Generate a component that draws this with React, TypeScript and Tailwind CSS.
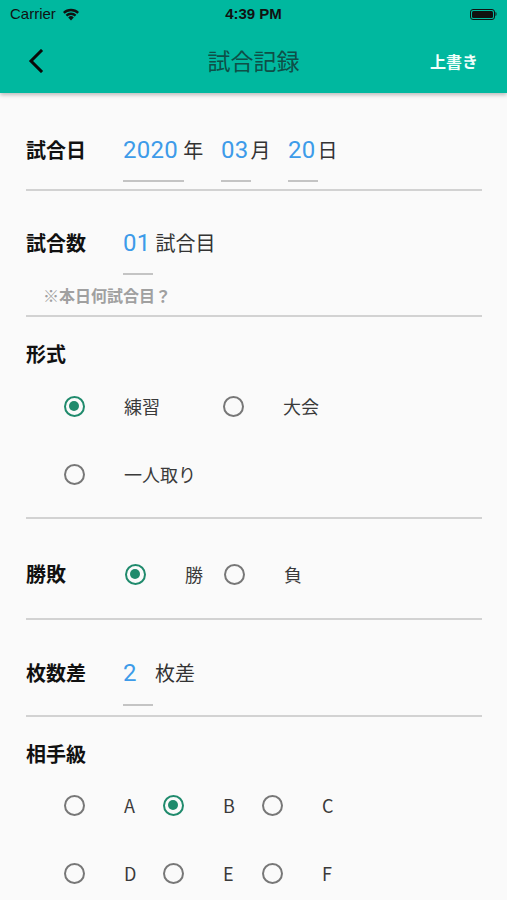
import React from "react";

const JP = { fontFamily: '"Noto Sans CJK JP", "Noto Sans", sans-serif' };
const NUM = { fontFamily: 'Roboto, "Noto Sans CJK JP", sans-serif' };

function Radio({ checked }: { checked?: boolean }) {
  return checked ? (
    <div className="w-[21px] h-[21px] rounded-full border-[2.5px] border-[#1f8a6c] flex items-center justify-center">
      <div className="w-[10px] h-[10px] rounded-full bg-[#1f8a6c]" />
    </div>
  ) : (
    <div className="w-[21px] h-[21px] rounded-full border-[2.5px] border-[#777777]" />
  );
}

function Divider() {
  return <div className="h-[2px] bg-[#d2d2d2]" />;
}

function Field({ value, unit, w, boxW, gap }: { value: string; unit: string; w: number; boxW: number; gap?: boolean }) {
  return (
    <div className="flex flex-col" style={{ width: boxW }}>
      <div className="flex items-center h-[28px]">
        <span className="text-[24px] text-[#3d9be9] leading-[28px] tracking-[0.3px]" style={NUM}>{value}</span>
        <span className={`text-[20px] text-[#333333] leading-[28px] ${gap ? "ml-[5px]" : "ml-[2px]"}`} style={JP}>{unit}</span>
      </div>
      <div className="h-[2px] bg-[#c4c4c4] mt-[16px]" style={{ width: w }} />
    </div>
  );
}

function RadioItem({ checked, label, width }: { checked?: boolean; label: string; width: number }) {
  return (
    <div className="flex items-center" style={{ width }}>
      <div className="w-[48px] flex justify-center">
        <Radio checked={checked} />
      </div>
      <span className="ml-[26px] text-[18px] text-[#3a3a3a]" style={JP}>{label}</span>
    </div>
  );
}

export default function App() {
  return (
    <div className="w-[507px] h-[900px] bg-[#fafafa] overflow-hidden relative" style={JP}>
      {/* Header */}
      <div className="bg-[#00b89f] h-[93px] relative z-10 shadow-[0_2px_4px_rgba(0,0,0,0.25)]">
        <div className="h-[28px] flex items-center justify-between px-[10px] relative">
          <div className="flex items-center gap-[6px]">
            <span className="text-[15px] text-[#111]" style={{ fontFamily: '"Liberation Sans", Arial, sans-serif' }}>Carrier</span>
            <svg width="18" height="13" viewBox="0 0 18 13">
              <path d="M9 12.5 L6.2 9.4 A4 4 0 0 1 11.8 9.4 Z" fill="#111" />
              <path d="M3.6 6.8 A7.6 7.6 0 0 1 14.4 6.8 L12.8 8.5 A5.3 5.3 0 0 0 5.2 8.5 Z" fill="#111" />
              <path d="M1 4.1 A11.3 11.3 0 0 1 17 4.1 L15.4 5.8 A9 9 0 0 0 2.6 5.8 Z" fill="#111" />
            </svg>
          </div>
          <span className="absolute left-1/2 -translate-x-1/2 text-[15px] font-bold text-[#111]" style={{ fontFamily: '"Liberation Sans", Arial, sans-serif' }}>4:39 PM</span>
          <div className="flex items-center">
            <div className="w-[25px] h-[11px] rounded-[3px] border border-[#111] p-[1px]">
              <div className="w-full h-full bg-[#111] rounded-[1.5px]" />
            </div>
            <div className="w-[2px] h-[4px] bg-[#111] opacity-50 rounded-r-sm" />
          </div>
        </div>
        <div className="h-[65px] flex items-center relative">
          <svg className="ml-[27px]" width="18" height="24" viewBox="0 0 18 24">
            <path d="M14 2 L4 12 L14 22" stroke="#0a0a0a" strokeWidth="3" fill="none" strokeLinecap="square" />
          </svg>
          <span className="absolute left-1/2 -translate-x-1/2 text-[23px] text-[#0e4f47]" style={JP}>試合記録</span>
          <span className="absolute right-[29px] text-[16px] font-bold text-[#f2fffb]" style={JP}>上書き</span>
        </div>
      </div>

      <div className="px-[26px] pr-[25px]">
        {/* 試合日 */}
        <div className="pt-[43px] flex items-start">
          <span className="w-[97px] text-[20px] font-bold text-[#111] leading-[28px]">試合日</span>
          <div className="flex">
            <Field value="2020" unit="年" w={61} boxW={98} gap />
            <Field value="03" unit="月" w={30} boxW={67} />
            <Field value="20" unit="日" w={30} boxW={60} />
          </div>
        </div>
        <div className="mt-[7px]"><Divider /></div>

        {/* 試合数 */}
        <div className="pt-[38px] flex items-start">
          <span className="w-[97px] text-[20px] font-bold text-[#111] leading-[28px]">試合数</span>
          <Field value="01" unit="試合目" w={30} boxW={120} gap />
        </div>
        <div className="mt-[10px] ml-[17px] h-[20px] flex items-center text-[16px] font-bold text-[#a0a0a0]">※本日何試合目？</div>
        <div className="mt-[10px]"><Divider /></div>

        {/* 形式 */}
        <div className="pt-[23px] h-[55px]">
          <span className="text-[20px] font-bold text-[#111] leading-[28px] block">形式</span>
        </div>
        <div className="ml-[24px]">
          <div className="h-[68px] flex items-center">
            <RadioItem checked label="練習" width={159} />
            <RadioItem label="大会" width={159} />
          </div>
          <div className="h-[68px] flex items-center">
            <RadioItem label="一人取り" width={159} />
          </div>
        </div>
        <div className="mt-[9px]"><Divider /></div>

        {/* 勝敗 */}
        <div className="pt-[41px] flex items-center h-[69px]">
          <span className="w-[85px] text-[20px] font-bold text-[#111] leading-[28px]">勝敗</span>
          <RadioItem checked label="勝" width={99} />
          <RadioItem label="負" width={99} />
        </div>
        <div className="mt-[30px]"><Divider /></div>

        {/* 枚数差 */}
        <div className="pt-[39px] flex items-start">
          <span className="w-[97px] text-[20px] font-bold text-[#111] leading-[28px]">枚数差</span>
          <div className="flex flex-col">
            <div className="flex items-center h-[28px]">
              <span className="text-[24px] text-[#3d9be9] leading-[28px] w-[32px]" style={NUM}>2</span>
              <span className="text-[20px] text-[#333333] leading-[28px]">枚差</span>
            </div>
            <div className="h-[2px] w-[30px] bg-[#c4c4c4] mt-[17px]" />
          </div>
        </div>
        <div className="mt-[9px]"><Divider /></div>

        {/* 相手級 */}
        <div className="pt-[23px]">
          <span className="text-[20px] font-bold text-[#111] leading-[28px] block">相手級</span>
        </div>
        <div className="ml-[24px] mt-[3px]">
          <div className="h-[68px] flex items-center">
            <RadioItem label="A" width={99} />
            <RadioItem checked label="B" width={99} />
            <RadioItem label="C" width={99} />
          </div>
          <div className="h-[68px] flex items-center">
            <RadioItem label="D" width={99} />
            <RadioItem label="E" width={99} />
            <RadioItem label="F" width={99} />
          </div>
        </div>
      </div>
    </div>
  );
}
